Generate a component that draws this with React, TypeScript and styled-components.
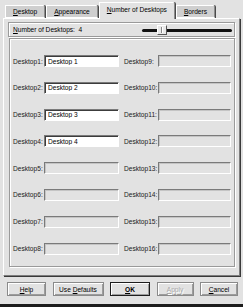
import React from 'react'
import styled, { createGlobalStyle } from 'styled-components'

const GlobalStyle = createGlobalStyle`
    html, body {
        margin: 0;
        padding: 0;
        background: #e2e2e2;
    }
    body {
        font-family: "Liberation Sans", Arial, sans-serif;
        font-size: 6.6px;
        color: #000;
    }
`

const Window = styled.div`
    width: 243px;
    height: 307px;
    box-sizing: border-box;
    display: flex;
    flex-direction: column;
    background: #e2e2e2;
    padding: 2px 3px 0 3px;
    border-bottom: 3px solid #1c1c1c;
    overflow: hidden;
`

const TabBar = styled.div`
    display: flex;
    align-items: flex-end;
    height: 16px;
    padding-left: 2px;
    gap: 1px;
`

const Tab = styled.div<{ $active?: boolean }>`
    box-sizing: border-box;
    height: ${p => (p.$active ? '17px' : '13px')};
    margin-bottom: ${p => (p.$active ? '-1px' : '0')};
    padding: ${p => (p.$active ? '3px 7px 0' : '2px 7px 0')};
    background: ${p => (p.$active ? '#e2e2e2' : '#cfcfcf')};
    border: 1px solid #8c8c8c;
    border-top-color: #fff;
    border-left-color: #fff;
    border-bottom: ${p => (p.$active ? 'none' : '1px solid #fff')};
    border-top-right-radius: 2px;
    box-shadow: 1px 0 0 #4a4a4a;
    position: relative;
    z-index: ${p => (p.$active ? 2 : 1)};
    white-space: nowrap;
    line-height: 8px;
`

const Key = styled.span`
    text-decoration: underline;
`

const Panel = styled.div`
    flex: 1;
    display: flex;
    flex-direction: column;
    gap: 1px;
    box-sizing: border-box;
    padding: 3px 4px 8px 4px;
    border: 1px solid #fff;
    border-right-color: #7e7e7e;
    border-bottom-color: #7e7e7e;
    box-shadow: 1px 1px 0 #3a3a3a;
`

const CountBox = styled.div`
    height: 15px;
    box-sizing: border-box;
    display: flex;
    align-items: center;
    justify-content: space-between;
    padding: 0 2px 0 4px;
    border: 1px solid #9a9a9a;
    box-shadow: inset 1px 1px 0 #fff, 1px 1px 0 #fff;
`

const Slider = styled.div`
    position: relative;
    width: 90px;
    height: 10px;
`

const Track = styled.div`
    position: absolute;
    left: 0;
    right: 0;
    top: 4px;
    height: 3px;
    border-radius: 2px;
    background: #111;
`

const Thumb = styled.div`
    position: absolute;
    left: 15px;
    top: 0;
    width: 10px;
    height: 10px;
    box-sizing: border-box;
    background: #e8e8e8;
    border: 1px solid #fff;
    border-right-color: #555;
    border-bottom-color: #555;
    &::after {
        content: '';
        position: absolute;
        left: 3px;
        top: 1px;
        width: 1px;
        height: 6px;
        background: #888;
        box-shadow: 1px 0 0 #fff;
    }
`

const Frame = styled.div`
    flex: 1;
    box-sizing: border-box;
    margin-left: 1px;
    border: 1px solid #9a9a9a;
    box-shadow: inset 1px 1px 0 #fff, 1px 1px 0 #fff;
    padding: 16px 0 0 3px;
`

const Grid = styled.div`
    display: grid;
    grid-template-columns: 31px 75px 39px 73px;
    grid-auto-rows: 12px;
    row-gap: 14.8px;
    align-items: center;
`

const Label = styled.span<{ $right?: boolean }>`
    padding-left: ${p => (p.$right ? '5px' : '0')};
    white-space: nowrap;
    color: #1a1a1a;
`

const NameInput = styled.input`
    box-sizing: border-box;
    width: 100%;
    height: 12px;
    margin: 0;
    padding: 0 0 0 3px;
    font-family: inherit;
    font-size: 6.6px;
    color: #000;
    background: #fff;
    border: 1px solid #fff;
    border-top-color: #7a7a7a;
    border-left-color: #7a7a7a;
    box-shadow: inset 1px 1px 0 #3c3c3c;
    outline: none;

    &:disabled {
        background: #e2e2e2;
        box-shadow: inset 1px 1px 0 #c4c4c4;
    }
`

const Footer = styled.div`
    height: 22px;
    display: flex;
    align-items: flex-start;
    justify-content: space-between;
    padding: 6px 2px 0 4px;
`

const Button = styled.div<{ $default?: boolean; $disabled?: boolean; $w: number }>`
    box-sizing: border-box;
    width: ${p => p.$w}px;
    height: 14px;
    display: flex;
    align-items: center;
    justify-content: center;
    background: #e2e2e2;
    border: 1px solid ${p => (p.$default ? '#1e1e1e' : '#8a8a8a')};
    box-shadow: inset 1px 1px 0 #fff, inset -1px -1px 0 #9c9c9c;
    font-weight: ${p => (p.$default ? 'bold' : 'normal')};
    color: ${p => (p.$disabled ? '#a8a8a8' : '#000')};
    text-shadow: ${p => (p.$disabled ? '1px 1px 0 #fff' : 'none')};
    white-space: nowrap;
`

const names = ['Desktop 1', 'Desktop 2', 'Desktop 3', 'Desktop 4']

const App: React.FC = () => {
    const rows = Array.from({ length: 8 }, (_, i) => i + 1)

    return (
        <Window>
            <GlobalStyle />
            <TabBar>
                <Tab><Key>D</Key>esktop</Tab>
                <Tab><Key>A</Key>ppearance</Tab>
                <Tab $active><Key>N</Key>umber of Desktops</Tab>
                <Tab><Key>B</Key>orders</Tab>
            </TabBar>
            <Panel>
                <CountBox>
                    <span><Key>N</Key>umber of Desktops:&nbsp;&nbsp;4</span>
                    <Slider>
                        <Track />
                        <Thumb />
                    </Slider>
                </CountBox>
                <Frame>
                    <Grid>
                        {rows.map(n => (
                            <React.Fragment key={n}>
                                <Label>Desktop{n}:</Label>
                                {names[n - 1] ? (
                                    <NameInput defaultValue={names[n - 1]} readOnly />
                                ) : (
                                    <NameInput disabled />
                                )}
                                <Label $right>Desktop{n + 8}:</Label>
                                <NameInput disabled />
                            </React.Fragment>
                        ))}
                    </Grid>
                </Frame>
            </Panel>
            <Footer>
                <Button $w={39}><span><Key>H</Key>elp</span></Button>
                <Button $w={51}><span>Use <Key>D</Key>efaults</span></Button>
                <Button $w={40} $default><span><Key>O</Key>K</span></Button>
                <Button $w={37} $disabled><span><Key>A</Key>pply</span></Button>
                <Button $w={38}><span><Key>C</Key>ancel</span></Button>
            </Footer>
        </Window>
    )
}

export default App
